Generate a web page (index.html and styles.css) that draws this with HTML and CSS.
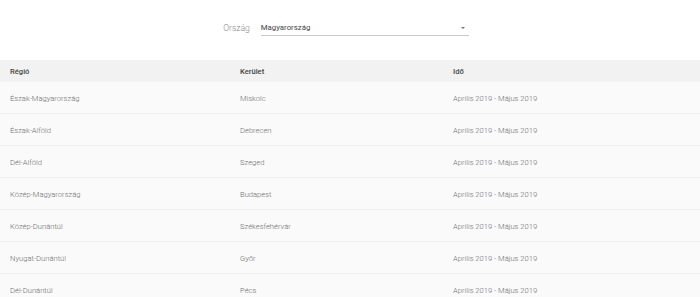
FILE: index.html
```html
<!DOCTYPE html>
<html lang="hu">
<head>
    <meta charset="UTF-8">
    <meta name="viewport" content="width=device-width, initial-scale=1.0">
    <title>Régiók</title>
    <link rel="stylesheet" href="styles.css">
</head>
<body>
    <div class="filter">
        <label class="filter-label" for="countrySelect">Ország</label>
        <div class="select" id="countrySelect">
            <span class="select-value">Magyarország</span>
            <span class="select-arrow"></span>
        </div>
    </div>

    <div class="table">
        <div class="row head">
            <div>Régió</div>
            <div>Kerület</div>
            <div>Idő</div>
        </div>
        <div class="row">
            <div>Észak-Magyarország</div>
            <div>Miskolc</div>
            <div>Aprilis 2019 - Május 2019</div>
        </div>
        <div class="row">
            <div>Észak-Alföld</div>
            <div>Debrecen</div>
            <div>Aprilis 2019 - Május 2019</div>
        </div>
        <div class="row">
            <div>Dél-Alföld</div>
            <div>Szeged</div>
            <div>Aprilis 2019 - Május 2019</div>
        </div>
        <div class="row">
            <div>Közép-Magyarország</div>
            <div>Budapest</div>
            <div>Aprilis 2019 - Május 2019</div>
        </div>
        <div class="row">
            <div>Közép-Dunántúl</div>
            <div>Székesfehérvár</div>
            <div>Aprilis 2019 - Május 2019</div>
        </div>
        <div class="row">
            <div>Nyugat-Dunántúl</div>
            <div>Győr</div>
            <div>Aprilis 2019 - Május 2019</div>
        </div>
        <div class="row">
            <div>Dél-Dunántúl</div>
            <div>Pécs</div>
            <div>Aprilis 2019 - Május 2019</div>
        </div>
    </div>
</body>
</html>
```

FILE: styles.css
```css
* {
    box-sizing: border-box;
}

html, body {
    margin: 0;
    padding: 0;
    font-family: Roboto, 'Liberation Sans', sans-serif;
    font-size: 7.6px;
    background: #fff;
    overflow: hidden;
}

/* FILTER */
.filter {
    height: 60px;
    display: flex;
    justify-content: center;
    align-items: flex-start;
    padding-top: 22px;
    gap: 11px;
    padding-right: 8px;
}

.filter-label {
    color: #8a8a8a;
    font-size: 8.6px;
    font-weight: 300;
    line-height: 11px;
    margin-top: 1px;
}

.select {
    width: 208px;
    height: 14px;
    display: flex;
    justify-content: space-between;
    align-items: center;
    border-bottom: 1px solid #c8c8c8;
    padding-bottom: 2px;
}

.select-value {
    color: #444;
    font-size: 7.8px;
}

.select-arrow {
    width: 0;
    height: 0;
    border-left: 2.5px solid transparent;
    border-right: 2.5px solid transparent;
    border-top: 2.5px solid #777;
    margin-right: 4px;
}

/* TABLE */
.row {
    display: grid;
    grid-template-columns: 230px 213px 1fr;
    padding-left: 10px;
    height: 32px;
    align-items: center;
    background: #fafafa;
    border-bottom: 1px solid #efefef;
    color: #6e6e6e;
    font-weight: 300;
    padding-top: 1px;
}

.row.head {
    height: 22px;
    background: #f2f2f2;
    border-bottom: none;
    color: #444;
    font-weight: 500;
    padding-top: 0;
}
```
